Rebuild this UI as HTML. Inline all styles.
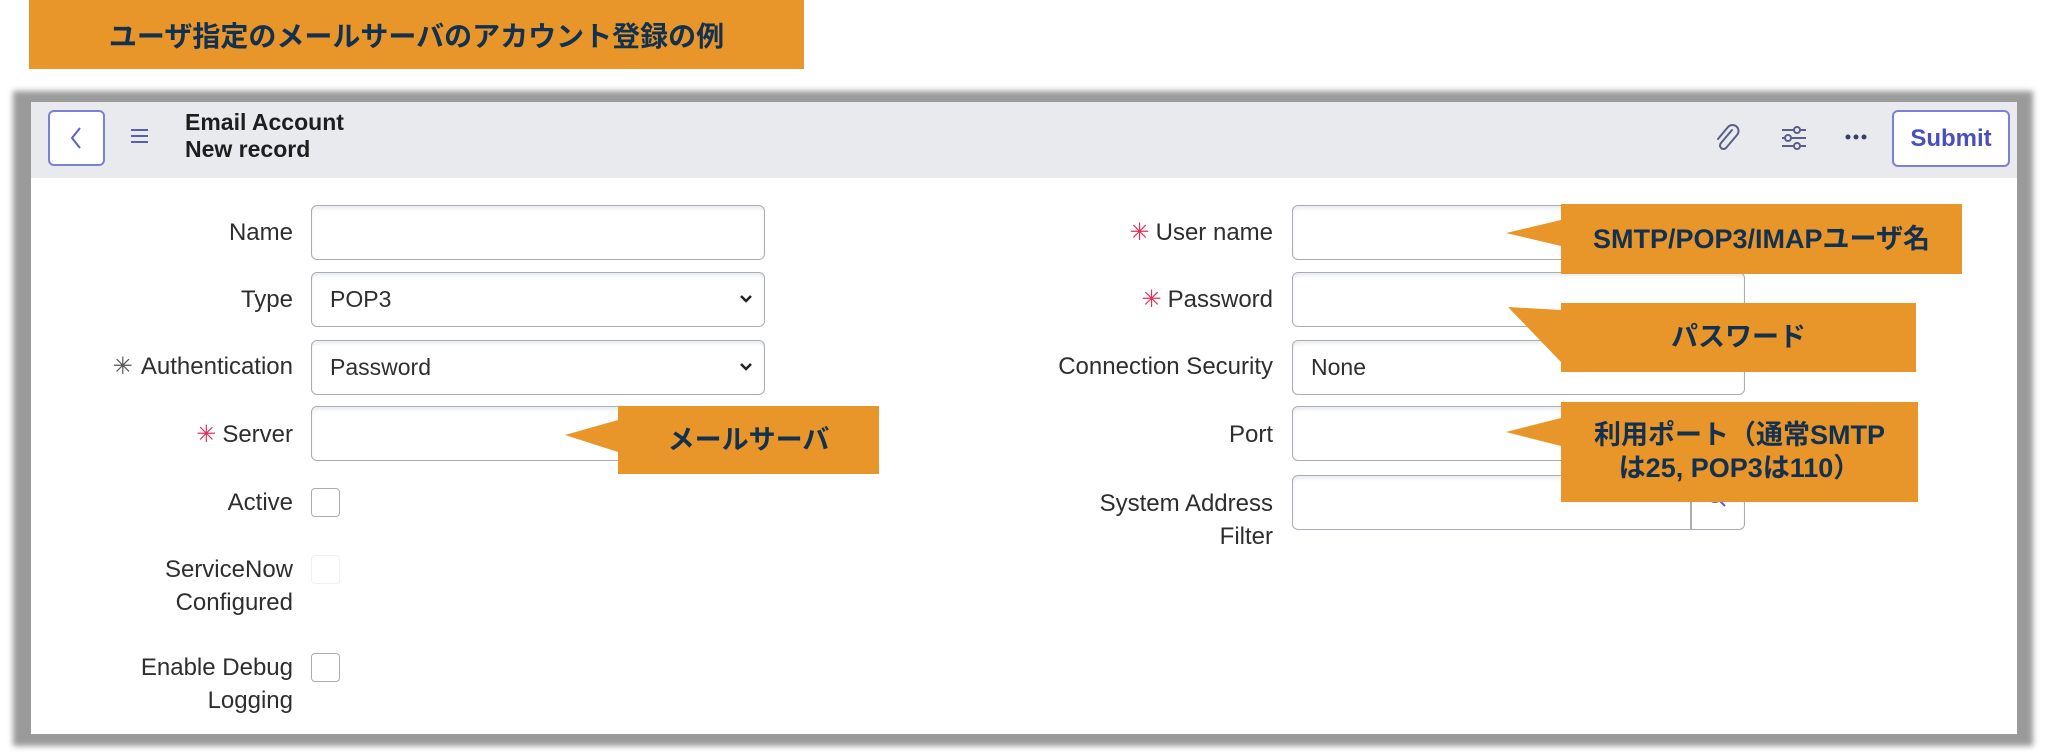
<!DOCTYPE html>
<html><head><meta charset="utf-8"><style>
*{box-sizing:border-box;margin:0;padding:0}
body{width:2048px;height:752px;background:#fff;position:relative;overflow:hidden;font-family:"Liberation Sans","Noto Sans CJK JP",sans-serif;color:#2e2e2e}
.abs{position:absolute}
.banner{left:29px;top:0;width:775px;height:69px;background:#E8952A;color:#123050;font-weight:bold;font-size:28px;display:flex;align-items:center;justify-content:center}
.frame{left:13px;top:91px;width:2020px;height:655px;background:#9a9a9a;filter:blur(3px)}
.card{left:31px;top:102px;width:1986px;height:632px;background:#fff}
.hdr{left:31px;top:102px;width:1986px;height:76px;background:#e9eaee}
.btn{border:2px solid #7b7fd6;border-radius:6px;background:#fff}
.lbl{font-size:24px;text-align:right;line-height:32px;color:#2e2e2e}
.inp{border:1.5px solid #a9acb4;border-radius:6px;background:#fff;height:55px;font-size:23px;padding-left:18px;display:flex;align-items:center;box-shadow:inset 0 3px 3px #eceef0}
.chev{position:absolute;right:10px;top:18px}
.cb{border:1.5px solid #a9acb4;border-radius:4px;width:29px;height:29px}
.co{background:#E8952A;color:#123050;font-weight:bold;font-size:27px;display:flex;align-items:center;justify-content:center;text-align:center;line-height:33px}
.req{color:#e0325a;margin-right:6px}
</style></head><body>
<div class="abs banner">ユーザ指定のメールサーバのアカウント登録の例</div>
<div class="abs frame"></div>
<div class="abs card"></div>
<div class="abs hdr"></div>
<div class="abs btn" style="left:48px;top:110px;width:57px;height:56px"><svg width="53" height="52"><path d="M30 16 L22 26 L30 36" stroke="#5a5fc8" stroke-width="2" fill="none"/></svg></div>
<svg class="abs" style="left:130px;top:128px" width="20" height="16"><path d="M1 2H18M1 8H18M1 14H18" stroke="#5a5fa8" stroke-width="2"/></svg>
<div class="abs" style="left:185px;top:109px;font-size:23px;font-weight:bold;line-height:27px;color:#1e1e1e">Email Account<br>New record</div>
<svg class="abs" style="left:1714px;top:124px" width="28" height="30"><path d="M18 6 L7 19 A3.5 3.5 0 0 0 12 24 L23 11 A6 6 0 0 0 14 3 L4 15" stroke="#5a5f8a" stroke-width="2" fill="none" stroke-linecap="round"/></svg>
<svg class="abs" style="left:1780px;top:124px" width="28" height="28"><g stroke="#5a5f8a" stroke-width="2" fill="#e9eaee"><path d="M2 6H26M2 14H26M2 22H26"/><circle cx="17" cy="6" r="3"/><circle cx="8" cy="14" r="3"/><circle cx="17" cy="22" r="3"/></g></svg>
<svg class="abs" style="left:1844px;top:132px" width="24" height="10"><g fill="#3a3f6a"><circle cx="4" cy="5" r="2.5"/><circle cx="12" cy="5" r="2.5"/><circle cx="20" cy="5" r="2.5"/></g></svg>
<div class="abs btn" style="left:1892px;top:110px;width:118px;height:57px;color:#4a4fc0;font-size:24px;font-weight:bold;display:flex;align-items:center;justify-content:center">Submit</div>

<!-- left column -->
<div class="abs lbl" style="right:1755px;top:217px">Name</div>
<div class="abs inp" style="left:311px;top:205px;width:454px"></div>
<div class="abs lbl" style="right:1755px;top:284px">Type</div>
<div class="abs inp" style="left:311px;top:272px;width:454px">POP3<svg class="chev" width="16" height="16"><path d="M3 5L8 10L13 5" stroke="#222" stroke-width="2.5" fill="none"/></svg></div>
<div class="abs lbl" style="right:1755px;top:351px"><span style="color:#555;margin-right:8px">✳</span>Authentication</div>
<div class="abs inp" style="left:311px;top:340px;width:454px">Password<svg class="chev" width="16" height="16"><path d="M3 5L8 10L13 5" stroke="#222" stroke-width="2.5" fill="none"/></svg></div>
<div class="abs lbl" style="right:1755px;top:419px"><span class="req">✳</span>Server</div>
<div class="abs inp" style="left:311px;top:406px;width:454px"></div>
<div class="abs lbl" style="right:1755px;top:487px">Active</div>
<div class="abs cb" style="left:311px;top:488px"></div>
<div class="abs lbl" style="right:1755px;top:553px;line-height:33px">ServiceNow<br>Configured</div>
<div class="abs cb" style="left:311px;top:555px;border-color:#f0f0f2"></div>
<div class="abs lbl" style="right:1755px;top:651px;line-height:33px">Enable Debug<br>Logging</div>
<div class="abs cb" style="left:311px;top:653px"></div>

<!-- right column -->
<div class="abs lbl" style="right:775px;top:217px"><span class="req">✳</span>User name</div>
<div class="abs inp" style="left:1292px;top:205px;width:453px"></div>
<div class="abs lbl" style="right:775px;top:284px"><span class="req">✳</span>Password</div>
<div class="abs inp" style="left:1292px;top:272px;width:453px"></div>
<div class="abs lbl" style="right:775px;top:351px">Connection Security</div>
<div class="abs inp" style="left:1292px;top:340px;width:453px">None</div>
<div class="abs lbl" style="right:775px;top:419px">Port</div>
<div class="abs inp" style="left:1292px;top:406px;width:453px"></div>
<div class="abs lbl" style="right:775px;top:487px;line-height:33px">System Address<br>Filter</div>
<div class="abs inp" style="left:1292px;top:475px;width:453px"></div>
<div class="abs" style="left:1690px;top:476px;width:1.5px;height:53px;background:#a9acb4"></div>
<svg class="abs" style="left:1706px;top:487px" width="24" height="24"><circle cx="9" cy="9" r="6" stroke="#5a5fc8" stroke-width="2" fill="none"/><path d="M13 13L19 19" stroke="#5a5fc8" stroke-width="2"/></svg>

<!-- callouts -->
<svg class="abs" style="left:0;top:0" width="2048" height="752">
<g fill="#E8952A">
<polygon points="1561,220 1506,233 1561,246"/>
<polygon points="1561,310 1508,307 1561,362"/>
<polygon points="618,420 565,435 618,452"/>
<polygon points="1561,418 1506,432 1561,446"/>
</g>
</svg>
<div class="abs co" style="left:1561px;top:204px;width:401px;height:70px">SMTP/POP3/IMAPユーザ名</div>
<div class="abs co" style="left:1561px;top:303px;width:355px;height:69px">パスワード</div>
<div class="abs co" style="left:618px;top:406px;width:261px;height:68px">メールサーバ</div>
<div class="abs co" style="left:1561px;top:402px;width:357px;height:100px">利用ポート（通常SMTP<br>は25, POP3は110）</div>
</body></html>
